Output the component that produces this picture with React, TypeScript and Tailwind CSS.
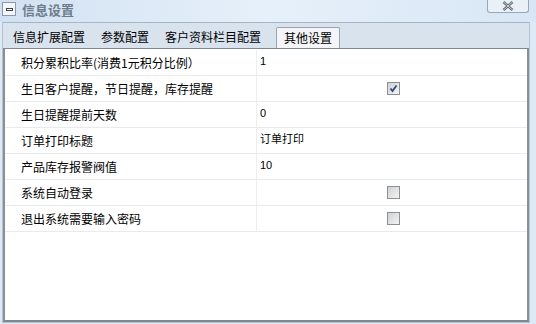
const rows: { label: string; value?: string; check?: boolean }[] = [
  { label: '积分累积比率(消费1元积分比例）', value: '1' },
  { label: '生日客户提醒，节日提醒，库存提醒', check: true },
  { label: '生日提醒提前天数', value: '0' },
  { label: '订单打印标题', value: '订单打印' },
  { label: '产品库存报警阀值', value: '10' },
  { label: '系统自动登录', check: false },
  { label: '退出系统需要输入密码', check: false },
];

const tabs = ['信息扩展配置', '参数配置', '客户资料栏目配置', '其他设置'];

function CheckBox({ checked }: { checked: boolean }) {
  return (
    <div className="flex size-[13px] items-center justify-center border border-[#8e8f8f] bg-gradient-to-br from-[#cfd1d4] to-[#f4f4f4]">
      {checked && (
        <svg width="9" height="9" viewBox="0 0 9 9">
          <path d="M1.5 4.5 L3.5 7 L7.5 1.5" fill="none" stroke="#2a4a7a" strokeWidth="1.8" />
        </svg>
      )}
    </div>
  );
}

export default function App() {
  return (
    <div className="flex h-[324px] w-[536px] flex-col bg-[#dde9f6] font-['Noto_Sans_CJK_SC',sans-serif] text-[12px] text-black">
      <div className="flex h-[22px] items-start bg-gradient-to-r from-[#d2e1f2] via-[#e6f0fa] to-[#d8e6f5]">
        <div className="mt-[2px] ml-[2px] flex size-[14px] items-center justify-center border border-[#8d99a8] bg-[#f3f6fa]">
          <div className="h-[3px] w-[7px] border border-[#444]" />
        </div>
        <div className="mt-[1px] ml-[6px] text-[13px] leading-[18px] font-bold text-[#6e7c8c]">信息设置</div>
        <div className="mr-[7px] ml-auto flex h-[13px] w-[42px] items-center justify-center rounded-b-[3px] border border-t-0 border-[#9aa6b4] bg-[#e9f0f8]">
          <svg width="12" height="10" viewBox="0 0 12 10">
            <path d="M1.5 1 L10.5 9 M10.5 1 L1.5 9" stroke="#55606c" strokeWidth="2.4" />
            <path d="M1.5 1 L10.5 9 M10.5 1 L1.5 9" stroke="#f2f5f8" strokeWidth="0.8" />
          </svg>
        </div>
      </div>
      <div className="mr-[6px] mb-[1px] ml-[2px] flex flex-1 flex-col border border-t-0 border-[#b7c2ce]">
        <div className="flex h-[26px] items-end border-t border-[#a8b5c4] bg-[#d9e3ee] pl-[1px]">
          {tabs.map((t, i) =>
            i === 3 ? (
              <div
                key={t}
                className="mb-[-1px] ml-[7px] flex h-[22px] w-[64px] items-center justify-center rounded-t-[2px] border border-b-0 border-[#9aa3ad] bg-[#f3f5f8] pb-[1px]"
              >
                {t}
              </div>
            ) : (
              <div key={t} className="flex h-[22px] items-center px-[8px] pb-[1px] first:pl-[9px]">
                {t}
              </div>
            ),
          )}
        </div>
        <div className="flex-1 border-t border-l-2 border-r-2 border-b-2 border-t-[#7f8790] border-l-[#8a8f96] border-r-[#8a8f96] border-b-[#7f868e] bg-white pt-[1px]">
          {rows.map((r) => (
            <div key={r.label} className="flex h-[26px] border-b border-[#e8ebee]">
              <div className="flex w-[252px] items-center border-r border-[#eceef0] pl-[16px] pt-[1px]">{r.label}</div>
              {r.check === undefined ? (
                <div className="flex flex-1 items-start pt-[3px] pl-[3px] font-['Liberation_Sans','Noto_Sans_CJK_SC',sans-serif] text-[11px]">
                  {r.value}
                </div>
              ) : (
                <div className="flex flex-1 items-center justify-center pl-[2px]">
                  <CheckBox checked={r.check} />
                </div>
              )}
            </div>
          ))}
        </div>
      </div>
    </div>
  );
}
